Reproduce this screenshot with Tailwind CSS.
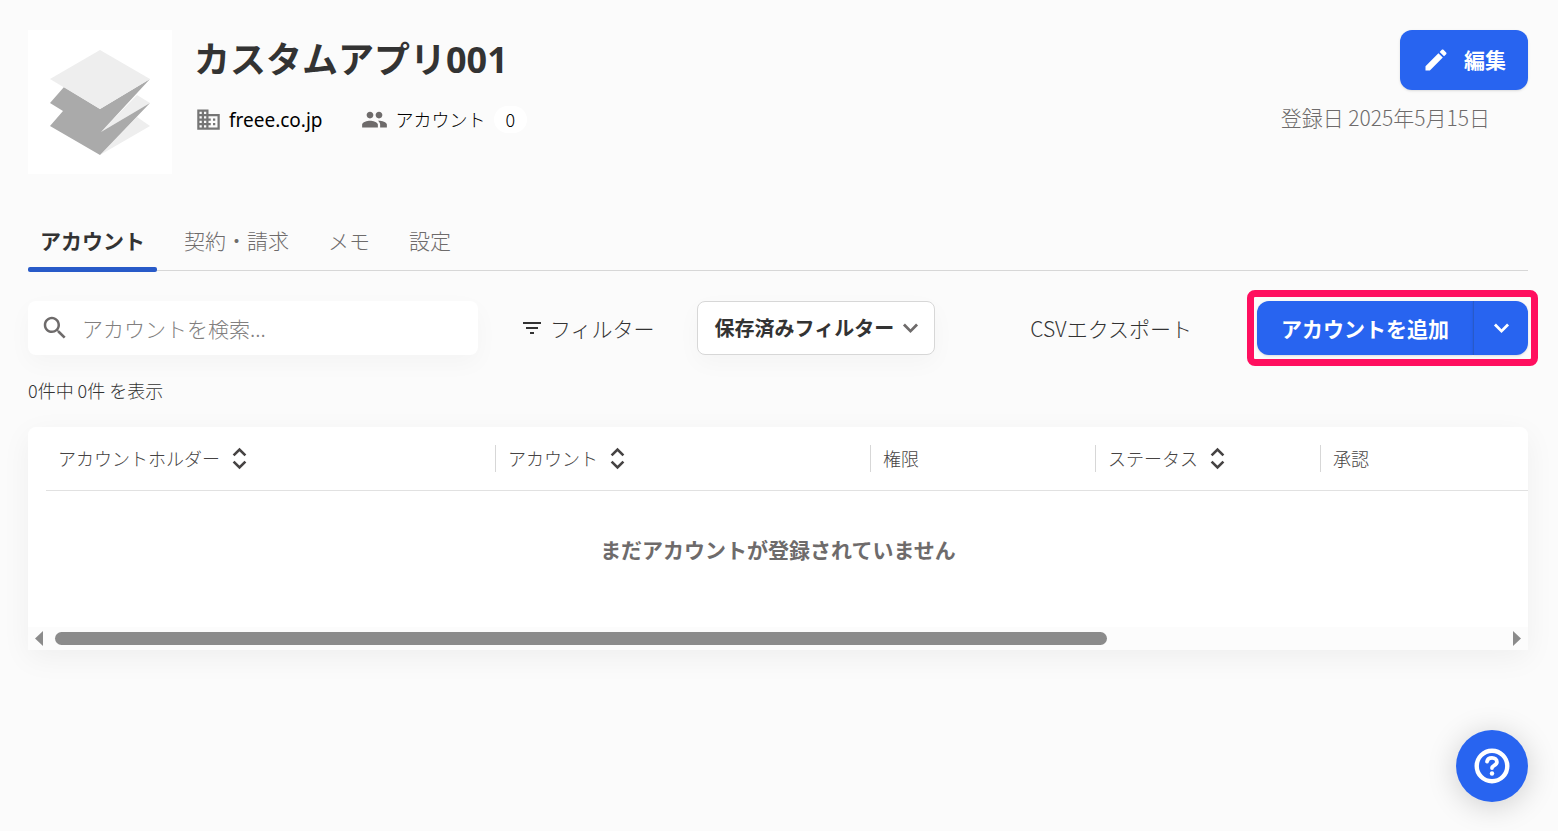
<!DOCTYPE html>
<html lang="ja">
<head>
    <meta charset="UTF-8">
    <meta name="viewport" content="width=device-width, initial-scale=1.0">
    <title>カスタムアプリ001</title>
    <script src="https://cdn.jsdelivr.net/npm/@tailwindcss/browser@4"></script>
</head>
<body class="min-h-screen bg-[#fbfbfb] pl-7 pr-[30px] pt-[30px] font-['Noto_Sans_CJK_JP',sans-serif] text-[21px] font-light leading-[30px] text-[#333]">
    <header class="flex items-start">
        <div class="size-36 shrink-0 bg-white">
            <svg viewBox="0 0 144 144" class="size-full" aria-hidden="true">
                <path fill="#eee" d="M109 87l13 9-50 29zM109 65l13 8-49 29z"/>
                <path fill="#aaa" d="M36 57L22 73l13 8-13 15 50 29 50-52-49 29 49-53-50 30z"/>
                <path fill="#eee" d="M72 20l50 29-50 30-50-30z"/>
            </svg>
        </div>
        <div class="ml-[22px]">
            <h1 class="font-['Noto_Sans','Noto_Sans_CJK_JP',sans-serif] text-[36px] font-bold leading-[60px]">カスタムアプリ001</h1>
            <div class="mt-[13px] flex items-center pl-px text-black">
                <svg viewBox="0 0 24 24" class="size-[27px]" fill="#757575" aria-hidden="true"><path d="M12 7V3H2v18h20V7H12zM6 19H4v-2h2v2zm0-4H4v-2h2v2zm0-4H4V9h2v2zm0-4H4V5h2v2zm4 12H8v-2h2v2zm0-4H8v-2h2v2zm0-4H8V9h2v2zm0-4H8V5h2v2zm10 12h-8v-2h2v-2h-2v-2h2v-2h-2V9h8v10zm-2-8h-2v2h2v-2zm0 4h-2v2h2v-2z"/></svg>
                <span class="ml-[7px] pt-[2px] font-['Noto_Sans',sans-serif] text-[19px] font-normal">freee.co.jp</span>
                <svg viewBox="0 0 24 24" class="ml-[38px] size-[27px]" fill="#6e6b6b" aria-hidden="true"><path d="M16 11c1.66 0 2.99-1.34 2.99-3S17.66 5 16 5c-1.66 0-3 1.34-3 3s1.34 3 3 3zm-8 0c1.66 0 2.99-1.34 2.99-3S9.66 5 8 5C6.34 5 5 6.34 5 8s1.34 3 3 3zm0 2c-2.33 0-7 1.17-7 3.5V19h14v-2.5c0-2.33-4.67-3.5-7-3.5zm8 0c-.29 0-.62.02-.97.05 1.16.84 1.97 1.97 1.97 3.45V19h6v-2.5c0-2.33-4.67-3.5-7-3.5z"/></svg>
                <span class="ml-2 text-[18px]">アカウント</span>
                <span class="ml-2 rounded-full bg-white px-3 text-[18px] leading-[27px]">0</span>
            </div>
        </div>
        <div class="ml-auto flex flex-col items-end">
            <button type="button" class="flex h-[60px] items-center rounded-xl bg-[#2864f0] px-[22px] pb-[2px] font-bold text-white shadow-sm">
                <svg viewBox="0 0 24 24" class="mr-[14px] mt-[2px] size-7" fill="currentColor" aria-hidden="true"><path d="M3 17.25V21h3.75L17.81 9.94l-3.75-3.75L3 17.25zM20.71 7.04c.39-.39.39-1.02 0-1.41l-2.34-2.34c-.39-.39-1.02-.39-1.41 0l-1.83 1.83 3.75 3.75 1.83-1.83z"/></svg>
                編集
            </button>
            <p class="mr-[38px] mt-3 text-[#6e6b6b]">登録日 2025年5月15日</p>
        </div>
    </header>

    <nav class="mt-[38px] flex gap-[15px] border-b border-[#d7d7d7] text-[#6e6b6b]">
        <a href="#accounts" class="relative px-3 pb-[15px] pt-[13px] font-bold text-[#333]">アカウント
            <span class="absolute inset-x-0 -bottom-[2px] h-[5px] rounded-[2px] bg-[#285ac8]"></span>
        </a>
        <a href="#contract" class="px-3 pb-[15px] pt-[13px]">契約・請求</a>
        <a href="#memo" class="px-3 pb-[15px] pt-[13px]">メモ</a>
        <a href="#settings" class="px-3 pb-[15px] pt-[13px]">設定</a>
    </nav>

    <main>
        <div class="mt-[30px] flex h-[54px] items-center">
            <label class="flex h-full w-[450px] items-center rounded-lg bg-white pl-3 shadow-[0_8px_24px_rgba(0,0,0,0.03)]">
                <svg viewBox="0 0 24 24" class="size-[30px]" fill="#6e6b6b" aria-hidden="true"><path d="M15.5 14h-.79l-.28-.27C15.41 12.59 16 11.11 16 9.5 16 5.91 13.09 3 9.5 3S3 5.91 3 9.5 5.91 16 9.5 16c1.61 0 3.09-.59 4.23-1.57l.27.28v.79l5 4.99L20.49 19l-4.99-5zm-6 0C7.01 14 5 11.99 5 9.5S7.01 5 9.5 5 14 7.01 14 9.5 11.99 14 9.5 14z"/></svg>
                <input type="search" aria-label="アカウントを検索" placeholder="アカウントを検索..." class="ml-3 min-w-0 flex-1 bg-transparent outline-none placeholder:text-[#827f7f]">
            </label>
            <button type="button" class="ml-[42px] flex items-center">
                <svg viewBox="0 0 24 24" class="mr-[6px] size-6" fill="currentColor" aria-hidden="true"><path d="M10 18h4v-2h-4v2zM3 6v2h18V6H3zm3 7h12v-2H6v2z"/></svg>
                フィルター
            </button>
            <button type="button" class="ml-[42px] flex h-full items-center rounded-lg border border-[#d7d7d7] bg-white px-[17px] pr-[10px] text-[20px] font-bold shadow-[0_8px_24px_rgba(0,0,0,0.03)]">
                保存済みフィルター
                <svg viewBox="0 0 24 24" class="ml-[3px] size-[27px]" fill="#6e6b6b" aria-hidden="true"><path d="M16.940 7.650L12 12.600 7.060 7.650 5.300 9.400l6.700 6.700 6.700-6.700z"/></svg>
            </button>
            <button type="button" class="ml-auto">CSVエクスポート</button>
            <div class="relative ml-[65px] flex h-full text-white">
                <button type="button" class="rounded-l-xl bg-[#2864f0] px-6 font-bold shadow-sm">アカウントを追加</button>
                <button type="button" aria-label="追加メニュー" class="flex w-[55px] items-center justify-center rounded-r-xl border-l border-[#285ac8] bg-[#2864f0] shadow-sm">
                    <svg viewBox="0 0 24 24" class="size-[27px]" fill="currentColor" aria-hidden="true"><path d="M16.940 7.650L12 12.600 7.060 7.650 5.300 9.400l6.700 6.700 6.700-6.700z"/></svg>
                </button>
                <div class="pointer-events-none absolute -inset-x-[10px] -inset-y-[11px] rounded-lg border-[7px] border-[#ff0f5f]"></div>
            </div>
        </div>

        <p class="mt-5 text-[18px]">0件中 0件 を表示</p>

        <section class="mt-[22px] rounded-t-lg bg-white shadow-[0_8px_30px_rgba(0,0,0,0.05)]">
            <div class="pl-[18px]">
                <table class="w-full table-fixed border-collapse text-left">
                    <thead class="text-[18px] leading-[27px] text-[#464343]">
                        <tr class="h-[63px] border-b border-[#e1e1e1]">
                            <th class="w-[449px] font-light">
                                <button type="button" class="flex items-center gap-[6px] pl-3">アカウントホルダー
                                    <svg viewBox="0 0 27 27" class="size-[27px]" fill="none" stroke="currentColor" stroke-width="2.6" aria-hidden="true"><path d="M7.600 10.400L13.500 4.500l5.900 5.900M7.600 16.600l5.900 5.900 5.900-5.900"/></svg>
                                </button>
                            </th>
                            <th class="w-[375px] font-light">
                                <button type="button" class="flex items-center gap-[6px] border-l border-[#d7d7d7] pl-3">アカウント
                                    <svg viewBox="0 0 27 27" class="size-[27px]" fill="none" stroke="currentColor" stroke-width="2.6" aria-hidden="true"><path d="M7.600 10.400L13.500 4.500l5.900 5.900M7.600 16.600l5.900 5.900 5.900-5.900"/></svg>
                                </button>
                            </th>
                            <th class="w-[225px] font-light"><div class="border-l border-[#d7d7d7] pl-3">権限</div></th>
                            <th class="w-[225px] font-light">
                                <button type="button" class="flex items-center gap-[6px] border-l border-[#d7d7d7] pl-3">ステータス
                                    <svg viewBox="0 0 27 27" class="size-[27px]" fill="none" stroke="currentColor" stroke-width="2.6" aria-hidden="true"><path d="M7.600 10.400L13.500 4.500l5.900 5.900M7.600 16.600l5.900 5.900 5.900-5.900"/></svg>
                                </button>
                            </th>
                            <th class="font-light"><div class="border-l border-[#d7d7d7] pl-3">承認</div></th>
                        </tr>
                    </thead>
                </table>
            </div>
            <p class="pb-[63px] pt-[43px] text-center font-bold text-[#6e6b6b]">まだアカウントが登録されていません</p>
            <!-- horizontal scroll bar -->
            <div class="flex h-[23px] items-center bg-[#fcfcfc] px-[7px]">
                <svg viewBox="0 0 8 15" class="h-[15px] w-2" fill="#8b8b8b" aria-hidden="true"><path d="M8 0v15L0 7.5z"/></svg>
                <div class="mx-3 flex-1">
                    <div class="h-[13px] w-8/11 rounded-full bg-[#8b8b8b]"></div>
                </div>
                <svg viewBox="0 0 8 15" class="h-[15px] w-2" fill="#8b8b8b" aria-hidden="true"><path d="M0 0v15l8-7.5z"/></svg>
            </div>
        </section>
    </main>

    <button type="button" aria-label="ヘルプ" class="fixed bottom-[29px] right-[30px] flex size-[72px] items-center justify-center rounded-full bg-[#2864f0] text-white shadow-[0_4px_30px_rgba(0,0,0,0.18)]">
        <svg viewBox="0 0 36 36" class="size-9" fill="none" stroke="currentColor" aria-hidden="true">
            <circle cx="18" cy="18" r="15.3" stroke-width="4.4"/>
            <path d="M13 13.6C13.4 11.2 15.4 9.8 18 9.8c2.8 0 4.9 1.6 4.9 4.1 0 3.6-4.9 3.2-4.900 6.200" stroke-width="3.8" stroke-linecap="round"/>
            <circle cx="18" cy="25.500" r="2.2" fill="currentColor" stroke="none"/>
        </svg>
    </button>
</body>
</html>
